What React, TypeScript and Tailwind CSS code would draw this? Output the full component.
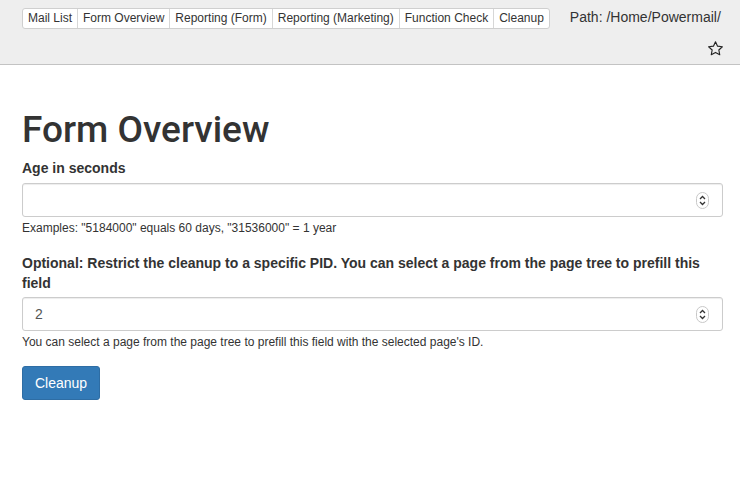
import React from "react";

const tabs = [
  "Mail List",
  "Form Overview",
  "Reporting (Form)",
  "Reporting (Marketing)",
  "Function Check",
  "Cleanup",
];

function Stepper() {
  return (
    <svg width="13" height="17" viewBox="0 0 13 17" className="absolute right-[13px] top-[8px]">
      <rect x="0.5" y="0.5" width="12" height="16" rx="6" fill="#fff" stroke="#c8c8c8" />
      <path d="M4 7 L6.5 4.5 L9 7" fill="none" stroke="#333" strokeWidth="1.3" />
      <path d="M4 10 L6.5 12.5 L9 10" fill="none" stroke="#333" strokeWidth="1.3" />
    </svg>
  );
}

function NumberInput({ value }: { value?: string }) {
  return (
    <div className="relative h-[34px] rounded-[3px] border border-[#cccccc] bg-white shadow-[inset_0_1px_1px_rgba(0,0,0,0.075)]">
      <div className="pl-[12px] text-[14px] leading-[32px] text-[#555]">{value}</div>
      <Stepper />
    </div>
  );
}

export default function App() {
  return (
    <div
      className="min-h-[485px] w-[740px] bg-white text-[#333]"
      style={{ fontFamily: '"Liberation Sans", Arial, sans-serif' }}
    >
      <div className="h-[65px] border-b border-[#c3c3c3] bg-[#eeeeee] pl-[22px] pr-[16px]">
        <div className="flex items-start pt-[8px]">
          <div className="flex h-[21px] rounded-[3px] border border-[#cfcfcf] bg-white">
            {tabs.map((t, i) => (
              <div
                key={t}
                className={`px-[5px] text-[12px] leading-[19px] text-[#333] ${i > 0 ? "border-l border-[#d7d7d7]" : ""}`}
              >
                {t}
              </div>
            ))}
          </div>
          <div className="ml-[20px] text-[14px] leading-[19px] text-[#333]">Path: /Home/Powermail/</div>
        </div>
        <div className="flex justify-end pt-[11px]">
          <svg width="17" height="17" viewBox="0 0 24 24" fill="none" stroke="#222" strokeWidth="1.6" strokeLinejoin="round">
            <path d="M12 2.5l2.9 6.2 6.8.8-5 4.6 1.3 6.7L12 17.5l-6 3.3 1.3-6.7-5-4.6 6.8-.8z" />
          </svg>
        </div>
      </div>

      <div className="pl-[22px] pr-[17px]">
        <h1
          className="mt-[45px] text-[37px] font-medium leading-[40px] text-[#333]"
          style={{ fontFamily: 'Roboto, "Liberation Sans", sans-serif' }}
        >
          Form Overview
        </h1>

        <div className="mt-[8px]">
          <div className="mb-[5px] text-[14px] font-bold leading-[20px]">Age in seconds</div>
          <NumberInput />
          <div className="mt-[3px] text-[12px] leading-[17px] text-[#333]">
            Examples: "5184000" equals 60 days, "31536000" = 1 year
          </div>
        </div>

        <div className="mt-[16px]">
          <div className="mb-[4px] text-[14px] font-bold leading-[20px]">
            Optional: Restrict the cleanup to a specific PID. You can select a page from the page tree to prefill this field
          </div>
          <NumberInput value="2" />
          <div className="mt-[3px] text-[12px] leading-[17px] text-[#333]">
            You can select a page from the page tree to prefill this field with the selected page's ID.
          </div>
        </div>

        <button className="mt-[15px] h-[34px] rounded-[3px] border border-[#2e6da4] bg-[#337ab7] px-[12px] text-[14px] text-white">
          Cleanup
        </button>
      </div>
    </div>
  );
}
